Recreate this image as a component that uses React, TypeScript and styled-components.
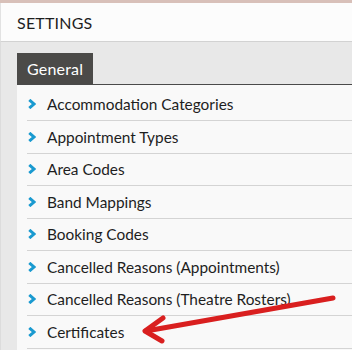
import React from "react";
import styled, { createGlobalStyle } from "styled-components";

const Global = createGlobalStyle`
  html, body { margin: 0; padding: 0; }
  body {
    width: 352px;
    height: 350px;
    overflow: hidden;
    font-family: Lato, "Open Sans", Arial, sans-serif;
    background: #e8e8e8;
  }
`;

const Page = styled.div`
  position: relative;
  width: 352px;
  height: 350px;
  overflow: hidden;
  display: flex;
  flex-direction: column;
  background: #e8e8e8;
`;

const TopStrip = styled.div`
  height: 3px;
  background: #d8c0b9;
  flex: none;
`;

const Header = styled.div`
  height: 38px;
  flex: none;
  display: flex;
  align-items: center;
  padding-left: 16px;
  background: #fcfcfc;
  border-left: 1px solid #e2e2e2;
  border-bottom: 1px solid #d2d2d2;
  font-size: 16px;
  color: #1e1e1e;
  letter-spacing: 0.2px;
`;

const Body = styled.div`
  flex: 1;
  display: flex;
  flex-direction: column;
  padding: 11px 0 0 16px;
  border-left: 1px solid #dcdcdc;
`;

const TabBar = styled.div`
  display: flex;
  border-bottom: 1px solid #4a4a4a;
`;

const Tab = styled.div<{ $active?: boolean }>`
  height: 31px;
  display: flex;
  align-items: center;
  padding: 0 10px;
  background: ${(p) => (p.$active ? "#4b4a48" : "transparent")};
  color: ${(p) => (p.$active ? "#ffffff" : "#333")};
  font-size: 16px;
  letter-spacing: 0.2px;
`;

const List = styled.ul`
  flex: 1;
  list-style: none;
  margin: 0;
  padding: 3.5px 0 0 10px;
  background: #f9f9f9;
`;

const Item = styled.li`
  height: 32.5px;
  box-sizing: border-box;
  display: flex;
  align-items: center;
  gap: 11px;
  padding-left: 1px;
  border-bottom: 1px solid #d4d4d4;
  font-size: 15.4px;
  color: #1e1e1e;
  white-space: nowrap;
`;

const Chevron = () => (
  <svg width="8" height="10" viewBox="0 0 8 10" style={{ flex: "none" }}>
    <polyline
      points="1.3,0.9 5.9,5 1.3,9.1"
      fill="none"
      stroke="#1a9ad0"
      strokeWidth="3"
      strokeLinejoin="miter"
    />
  </svg>
);

const ArrowLayer = styled.svg`
  position: absolute;
  left: 0;
  top: 0;
  pointer-events: none;
`;

const items = [
  "Accommodation Categories",
  "Appointment Types",
  "Area Codes",
  "Band Mappings",
  "Booking Codes",
  "Cancelled Reasons (Appointments)",
  "Cancelled Reasons (Theatre Rosters)",
  "Certificates",
];

export default function App() {
  return (
    <>
      <Global />
      <Page>
        <TopStrip />
        <Header>SETTINGS</Header>
        <Body>
          <TabBar>
            <Tab $active>General</Tab>
          </TabBar>
          <List>
            {items.map((t) => (
              <Item key={t}>
                <Chevron />
                {t}
              </Item>
            ))}
          </List>
        </Body>
        <ArrowLayer width="352" height="350" viewBox="0 0 352 350">
          <g stroke="#d91f1f" strokeWidth="5" strokeLinecap="round" strokeLinejoin="round" fill="none">
            <line x1="333" y1="298" x2="146" y2="331" />
            <polyline points="163,318 145,331 162,341" />
          </g>
        </ArrowLayer>
      </Page>
    </>
  );
}
